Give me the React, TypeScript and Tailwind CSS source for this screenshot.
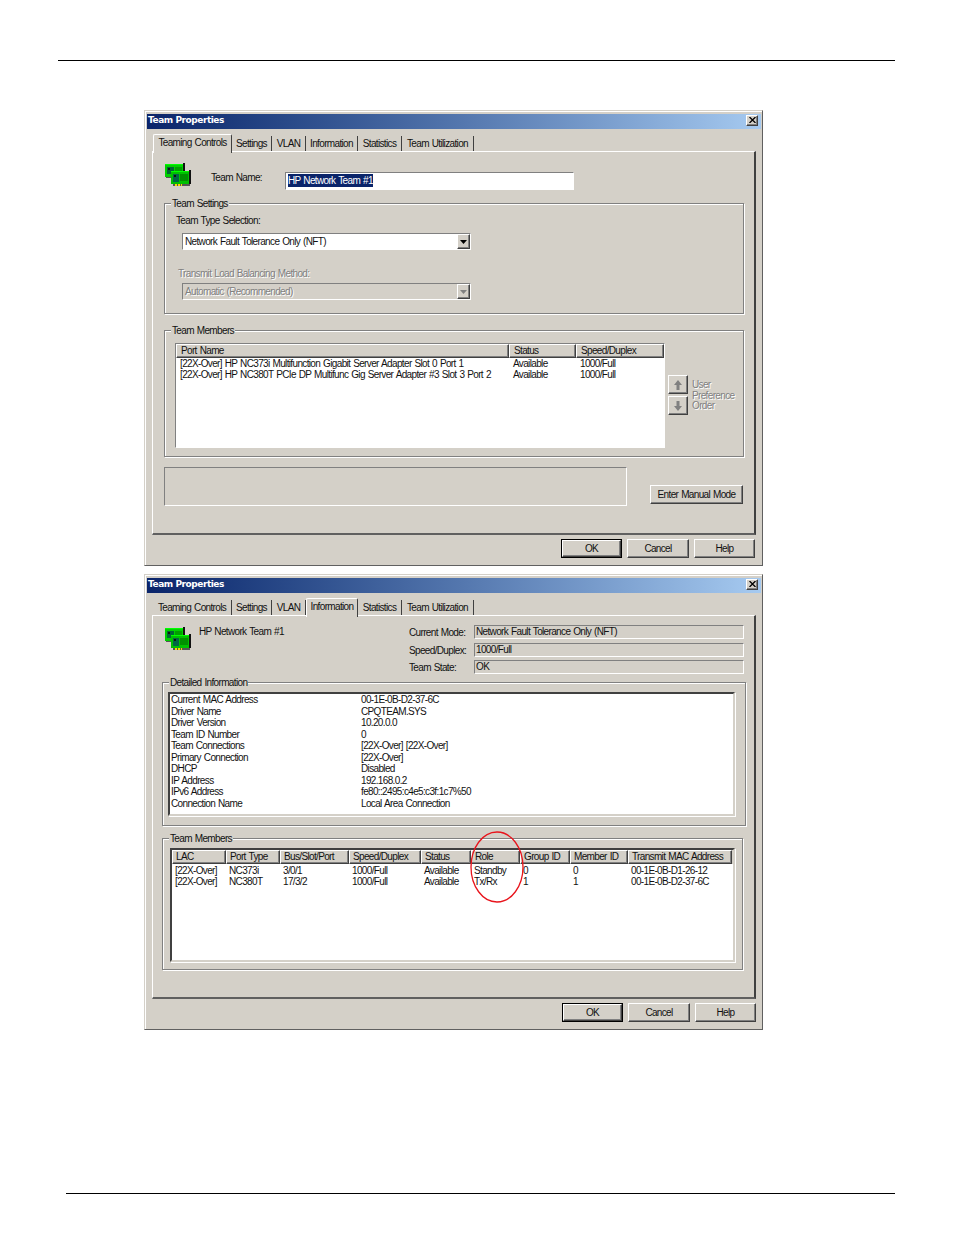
import React from 'react';

const raised = "border border-t-white border-l-white border-r-[#404040] border-b-[#404040] shadow-[inset_-1px_-1px_0_#808080]";
const sunken = "border border-t-[#808080] border-l-[#808080] border-r-white border-b-white";
const deep = "border-2 border-t-[#404040] border-l-[#404040] border-r-[#d4d0c8] border-b-[#d4d0c8] shadow-[1px_1px_0_#fff]";
const dimText = "text-[#808080] [text-shadow:1px_1px_0_#fff]";

const TABS = [
  { label: 'Teaming Controls', w: 'w-[79px]' },
  { label: 'Settings', w: 'w-[40px]' },
  { label: 'VLAN', w: 'w-[34px]' },
  { label: 'Information', w: 'w-[52px]' },
  { label: 'Statistics', w: 'w-[44px]' },
  { label: 'Team Utilization', w: 'w-[72px]' },
];

function TeamIcon() {
  return (
    <svg width="26" height="24" viewBox="0 0 26 24" className="shrink-0">
      <rect x="18" y="0" width="2" height="14" fill="#111" />
      <rect x="0" y="1" width="18" height="13" fill="#00d000" />
      <rect x="0" y="1" width="18" height="1" fill="#00ff00" />
      <rect x="2" y="4" width="7" height="7" fill="#063" />
      <rect x="3" y="5" width="2" height="2" fill="#111" />
      <rect x="10" y="4" width="7" height="5" fill="#00a000" />
      <rect x="1" y="14" width="18" height="1" fill="#555" />
      <rect x="24" y="7" width="2" height="14" fill="#111" />
      <rect x="6" y="8" width="18" height="13" fill="#00c000" />
      <rect x="6" y="8" width="18" height="1" fill="#00ff00" />
      <rect x="8" y="11" width="6" height="8" fill="#064" />
      <rect x="9" y="12" width="2" height="2" fill="#111" />
      <rect x="15" y="11" width="8" height="7" fill="#009000" />
      <rect x="8" y="21" width="17" height="2" fill="#555" />
      <rect x="10" y="21" width="2" height="2" fill="#f0e000" />
      <rect x="13" y="21" width="2" height="2" fill="#f0e000" />
      <rect x="16" y="21" width="1" height="2" fill="#f0e000" />
    </svg>
  );
}

function Group({ title, className, children }: { title: string; className: string; children: React.ReactNode }) {
  return (
    <div className={`relative border border-[#808080] shadow-[inset_1px_1px_0_#fff,1px_1px_0_#fff] ${className}`}>
      <span className="absolute left-[6px] top-[-6px] bg-[#d4d0c8] px-px leading-[12px]">{title}</span>
      {children}
    </div>
  );
}

function Combo({ text, disabled, className }: { text: string; disabled?: boolean; className: string }) {
  return (
    <div className={`flex items-center h-[17px] w-[289px] ${sunken} ${disabled ? 'bg-[#d4d0c8]' : 'bg-white'} ${className}`}>
      <span className={`flex-1 pl-[2px] ${disabled ? dimText : ''}`}>{text}</span>
      <div className={`flex items-center justify-center w-[13px] h-[15px] bg-[#d4d0c8] ${raised}`}>
        <svg width="7" height="4" viewBox="0 0 7 4"><path d="M0 0h7L3.5 4z" fill={disabled ? '#808080' : '#000'} /></svg>
      </div>
    </div>
  );
}

function Btn({ label, className, isDefault }: { label: string; className: string; isDefault?: boolean }) {
  return (
    <div className={`flex items-center justify-center ${isDefault ? 'border border-black' : ''} ${className}`}>
      <div className={`flex items-center justify-center w-full h-full ${raised}`}>{label}</div>
    </div>
  );
}

type Col = { label: string; w: string };

function ListHeader({ cols, className, pad }: { cols: Col[]; className: string; pad: string }) {
  return (
    <div className={`flex bg-[#d4d0c8] ${className}`}>
      {cols.map((c) => (
        <div key={c.label} className={`${c.w} shrink-0 whitespace-nowrap leading-[12px] ${pad} ${raised}`}>{c.label}</div>
      ))}
    </div>
  );
}

function ListRow({ cells, cols, pad }: { cells: string[]; cols: Col[]; pad: string }) {
  return (
    <div className="flex h-[11.25px] leading-[11.25px]">
      {cells.map((c, i) => (
        <div key={i} className={`${cols[i].w} shrink-0 whitespace-nowrap ${pad}`}>{c}</div>
      ))}
    </div>
  );
}

function Dialog({ active, buttonsMl, children }: { active: string; buttonsMl: string; children: React.ReactNode }) {
  return (
    <div className="ml-[144px] w-[619px] h-[456px] shrink-0 bg-[#d4d0c8] border border-t-[#d4d0c8] border-l-[#d4d0c8] border-r-[#606060] border-b-[#606060] shadow-[inset_1px_1px_0_#fff] pt-[3px] pl-[2px]">
      <div className="flex items-center justify-between w-[614px] h-[15px] bg-gradient-to-r from-[#0a246a] to-[#a6caf0] pl-px pr-[3px]">
        <span className="mb-px font-bold text-white text-[9px] tracking-[-0.45px] [word-spacing:0] font-['DejaVu_Sans',sans-serif]">Team Properties</span>
        <div className={`mb-[3px] flex items-center justify-center w-[12px] h-[11px] bg-[#d4d0c8] ${raised}`}>
          <svg width="7" height="6" viewBox="0 0 7 6"><path d="M0.5 0l6 6M6.5 0l-6 6" stroke="#000" strokeWidth="1.3" /></svg>
        </div>
      </div>
      <div className="flex items-end h-[22px] ml-[6px]">
        {TABS.map((t) =>
          t.label === active ? (
            <div key={t.label} className={`relative z-10 ${t.w} h-[19px] -mb-[2px] text-center whitespace-nowrap bg-[#d4d0c8] border border-b-0 border-t-white border-l-white border-r-[#404040] leading-[15px] rounded-t-[2px]`}>{t.label}</div>
          ) : (
            <div key={t.label} className={`${t.w} h-[15px] text-center border-r border-r-[#404040] leading-[16px] whitespace-nowrap`}>{t.label}</div>
          )
        )}
      </div>
      <div className="w-[604px] h-[384px] ml-[5px] border border-t-white border-l-white border-r-2 border-r-[#404040] border-b-2 border-b-[#606060]">
        {children}
      </div>
      <div className={`flex gap-[5px] mt-[4px] ${buttonsMl}`}>
        <Btn label="OK" isDefault className="w-[61px] h-[19px]" />
        <Btn label="Cancel" className="w-[62px] h-[19px]" />
        <Btn label="Help" className="w-[61px] h-[19px]" />
      </div>
    </div>
  );
}

const PORT_COLS = [
  { label: 'Port Name', w: 'w-[333px]' },
  { label: 'Status', w: 'w-[67px]' },
  { label: 'Speed/Duplex', w: 'w-[88px]' },
];

const INFO = [
  ['Current MAC Address', '00-1E-0B-D2-37-6C'],
  ['Driver Name', 'CPQTEAM.SYS'],
  ['Driver Version', '10.20.0.0'],
  ['Team ID Number', '0'],
  ['Team Connections', '[22X-Over] [22X-Over]'],
  ['Primary Connection', '[22X-Over]'],
  ['DHCP', 'Disabled'],
  ['IP Address', '192.168.0.2'],
  ['IPv6 Address', 'fe80::2495:c4e5:c3f:1c7%50'],
  ['Connection Name', 'Local Area Connection'],
];

const MEMBER_COLS = [
  { label: 'LAC', w: 'w-[54px]' },
  { label: 'Port Type', w: 'w-[54px]' },
  { label: 'Bus/Slot/Port', w: 'w-[69px]' },
  { label: 'Speed/Duplex', w: 'w-[72px]' },
  { label: 'Status', w: 'w-[50px]' },
  { label: 'Role', w: 'w-[49px]' },
  { label: 'Group ID', w: 'w-[50px]' },
  { label: 'Member ID', w: 'w-[58px]' },
  { label: 'Transmit MAC Address', w: 'w-[104px]' },
];

function ControlsPanel() {
  return (
    <>
      <div className="flex items-start mt-[11px] ml-[12px]">
        <TeamIcon />
        <span className="w-[74px] ml-[20px] mt-[9px] leading-[12px]">Team Name:</span>
        <div className={`mt-[9px] w-[289px] h-[18px] bg-white flex items-center pl-[2px] pb-[2px] ${sunken}`}>
          <span className="bg-[#0a246a] text-white leading-[13px]">HP Network Team #1</span>
        </div>
      </div>
      <Group title="Team Settings" className="mt-[13px] ml-[11px] w-[580px] h-[111px]">
        <div className="ml-[11px] mt-[11px] leading-[12px]">Team Type Selection:</div>
        <Combo text="Network Fault Tolerance Only (NFT)" className="ml-[17px] mt-[6px]" />
        <div className={`ml-[13px] mt-[18px] leading-[12px] ${dimText}`}>Transmit Load Balancing Method:</div>
        <Combo text="Automatic (Recommended)" disabled className="ml-[17px] mt-[3px]" />
      </Group>
      <Group title="Team Members" className="mt-[16px] ml-[11px] w-[580px] h-[127px]">
        <div className="flex items-start ml-[10px] mt-[12px]">
          <div className={`w-[490px] h-[105px] bg-white ${sunken}`}>
            <ListHeader cols={PORT_COLS} className="h-[14px]" pad="pl-[4px]" />
            <ListRow cols={PORT_COLS} pad="pl-[4px]" cells={['[22X-Over] HP NC373i Multifunction Gigabit Server Adapter Slot 0 Port 1', 'Available', '1000/Full']} />
            <ListRow cols={PORT_COLS} pad="pl-[4px]" cells={['[22X-Over] HP NC380T PCIe DP Multifunc Gig Server Adapter #3 Slot 3 Port 2', 'Available', '1000/Full']} />
          </div>
          <div className="ml-[3px] mt-[32px] flex flex-col gap-[2px]">
            <div className={`flex items-center justify-center w-[20px] h-[19px] ${raised}`}>
              <svg width="8" height="10" viewBox="0 0 8 10"><path d="M4 0l4 5H5.5v5h-3V5H0z" fill="#808080" /></svg>
            </div>
            <div className={`flex items-center justify-center w-[20px] h-[19px] ${raised}`}>
              <svg width="8" height="10" viewBox="0 0 8 10"><path d="M4 10L0 5h2.5V0h3v5H8z" fill="#808080" /></svg>
            </div>
          </div>
          <div className={`ml-[4px] mt-[37px] leading-[10.5px] ${dimText}`}>User<br />Preference<br />Order</div>
        </div>
      </Group>
      <div className="flex items-start mt-[10px] ml-[11px]">
        <div className={`w-[463px] h-[39px] ${sunken}`} />
        <Btn label="Enter Manual Mode" className="ml-[23px] mt-[18px] w-[93px] h-[19px]" />
      </div>
    </>
  );
}

function InfoPanel() {
  return (
    <>
      <div className="flex items-start mt-[9px] ml-[12px]">
        <div className="mt-[2px]"><TeamIcon /></div>
        <span className="ml-[8px] mt-px w-[210px] leading-[12px]">HP Network Team #1</span>
        <div className="flex flex-col">
          {[
            ['Current Mode:', 'Network Fault Tolerance Only (NFT)', 'mt-0'],
            ['Speed/Duplex:', '1000/Full', 'mt-[4px]'],
            ['Team State:', 'OK', 'mt-[3px]'],
          ].map(([label, value, gap]) => (
            <div key={label} className={`flex items-center h-[14px] ${gap}`}>
              <span className="w-[65px] whitespace-nowrap">{label}</span>
              <div className={`w-[270px] h-[14px] pl-px leading-[11px] ${sunken}`}>{value}</div>
            </div>
          ))}
        </div>
      </div>
      <Group title="Detailed Information" className="mt-[8px] ml-[9px] w-[584px] h-[144px]">
        <div className={`ml-[5px] mt-[9px] w-[567px] h-[124px] bg-white ${deep}`}>
          {INFO.map(([k, v]) => (
            <div key={k} className="flex h-[11.5px] leading-[11.5px] pl-px">
              <span className="w-[190px]">{k}</span>
              <span>{v}</span>
            </div>
          ))}
        </div>
      </Group>
      <Group title="Team Members" className="mt-[12px] ml-[9px] w-[581px] h-[132px]">
        <div className={`ml-[7px] mt-[9px] w-[565px] h-[114px] bg-white ${deep}`}>
          <ListHeader cols={MEMBER_COLS} className="h-[14px] mb-[0.5px]" pad="pl-[3px]" />
          <ListRow cols={MEMBER_COLS} pad="pl-[3px]" cells={['[22X-Over]', 'NC373i', '3/0/1', '1000/Full', 'Available', 'Standby', '0', '0', '00-1E-0B-D1-26-12']} />
          <ListRow cols={MEMBER_COLS} pad="pl-[3px]" cells={['[22X-Over]', 'NC380T', '17/3/2', '1000/Full', 'Available', 'Tx/Rx', '1', '1', '00-1E-0B-D2-37-6C']} />
        </div>
      </Group>
    </>
  );
}

export default function App() {
  return (
    <div className="relative flex flex-col w-[954px] h-[1235px] bg-white text-[10px] tracking-[-0.65px] [word-spacing:0.8px] text-[#111] font-['Liberation_Sans',sans-serif]">
      <div className="mt-[60px] ml-[58px] w-[837px] h-px bg-black shrink-0" />
      <div className="h-[49px] shrink-0" />
      <Dialog active="Teaming Controls" buttonsMl="ml-[414px]"><ControlsPanel /></Dialog>
      <div className="h-[8px] shrink-0" />
      <Dialog active="Information" buttonsMl="ml-[415px]"><InfoPanel /></Dialog>
      <div className="mt-[163px] ml-[66px] w-[829px] h-px bg-black shrink-0" />
      {/* hand-drawn annotation round the Role column */}
      <svg className="absolute left-[468px] top-[830px]" width="58" height="75" viewBox="0 0 58 75">
        <ellipse cx="29" cy="37" rx="26" ry="35" fill="none" stroke="#e8141c" strokeWidth="1.3" />
      </svg>
    </div>
  );
}
